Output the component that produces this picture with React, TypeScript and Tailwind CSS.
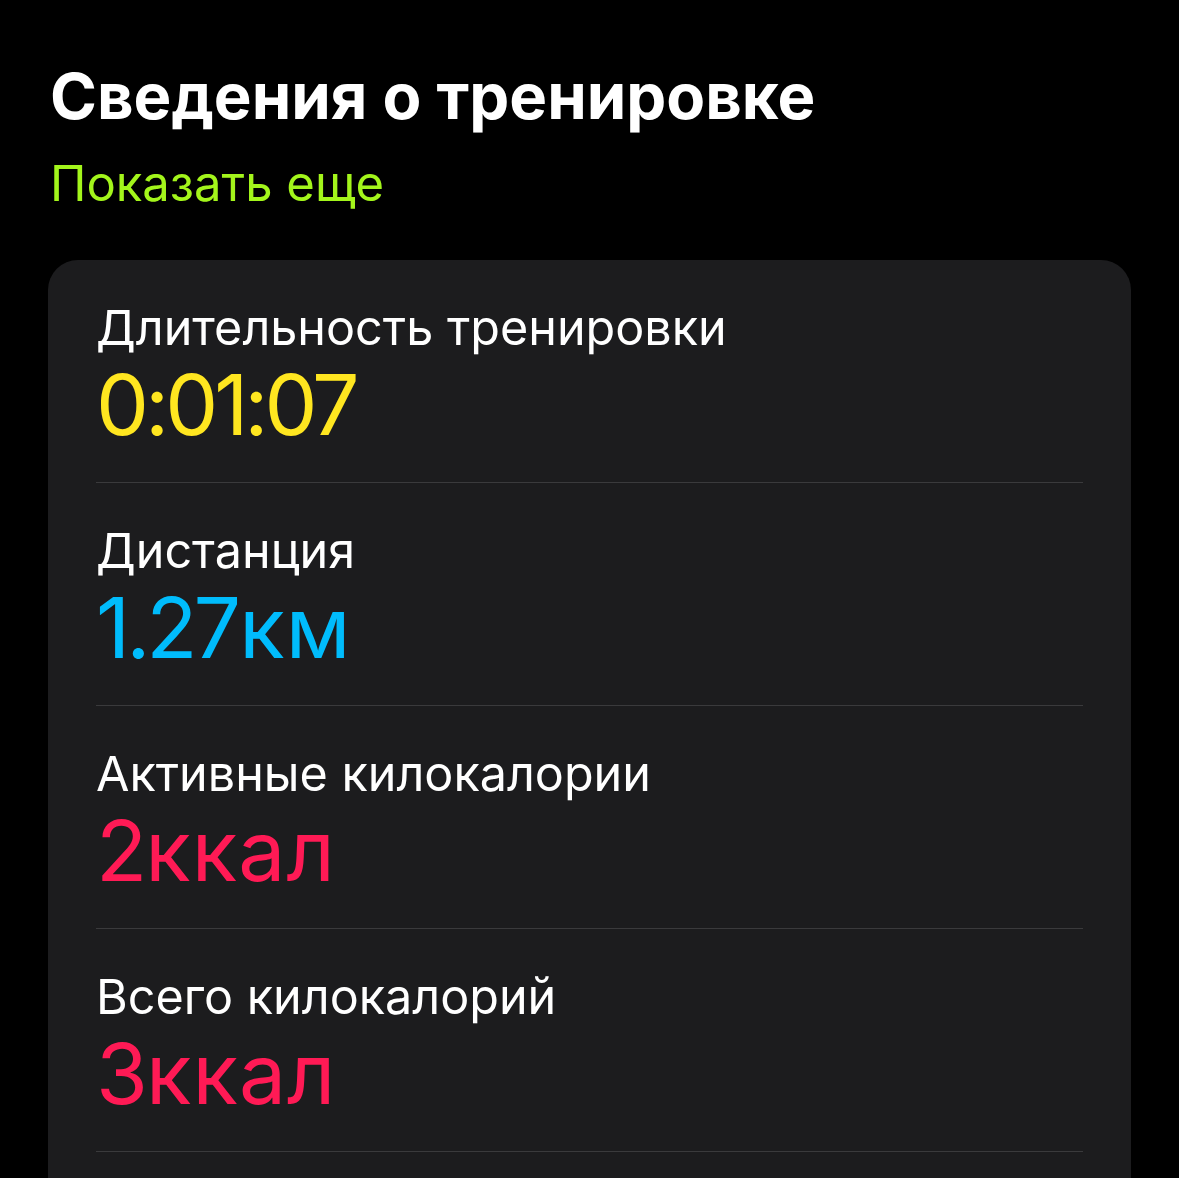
const rows = [
  { label: "Длительность тренировки", num: "0:01:07", unit: "", color: "text-[#ffe620]" },
  { label: "Дистанция", num: "1.27", unit: "км", color: "text-[#00bcfc]" },
  { label: "Активные килокалории", num: "2", unit: "ккал", color: "text-[#ff1a55]" },
  { label: "Всего килокалорий", num: "3", unit: "ккал", color: "text-[#ff1a55]" },
];

type Row = { label: string; num: string; unit: string; color: string };

function StatRow({ label, num, unit, color }: Row) {
  return (
    <div className="pl-[48px]">
      <div className="pr-[48px] pt-[40px] pb-[32px]">
        <div className="text-[48.5px] leading-[56px] text-white">{label}</div>
        <div className={`mt-[4px] text-[84px] leading-[90px] ${color}`}>
          <span className="tracking-[-4px]">{num}</span>
          {unit && <span className="ml-[2px] tracking-[1px]">{unit}</span>}
        </div>
      </div>
      <div className="h-px mr-[48px] bg-[#3a3a3c]" />
    </div>
  );
}

export default function App() {
  return (
    <div className="min-h-[1178px] overflow-hidden bg-black px-[48px] pt-[60px] font-['Inter','Noto_Sans',sans-serif]">
      <h1 className="px-[2px] text-[63.5px] leading-[72px] font-bold text-white">
        Сведения о тренировке
      </h1>
      <div className="mt-[22px] px-[2px] text-[49px] leading-[60px] text-[#a3f51b]">Показать еще</div>
      <div className="mt-[46px] rounded-[30px] bg-[#1c1c1e] pb-[200px]">
        {rows.map((r) => (
          <StatRow key={r.label} {...r} />
        ))}
      </div>
    </div>
  );
}
